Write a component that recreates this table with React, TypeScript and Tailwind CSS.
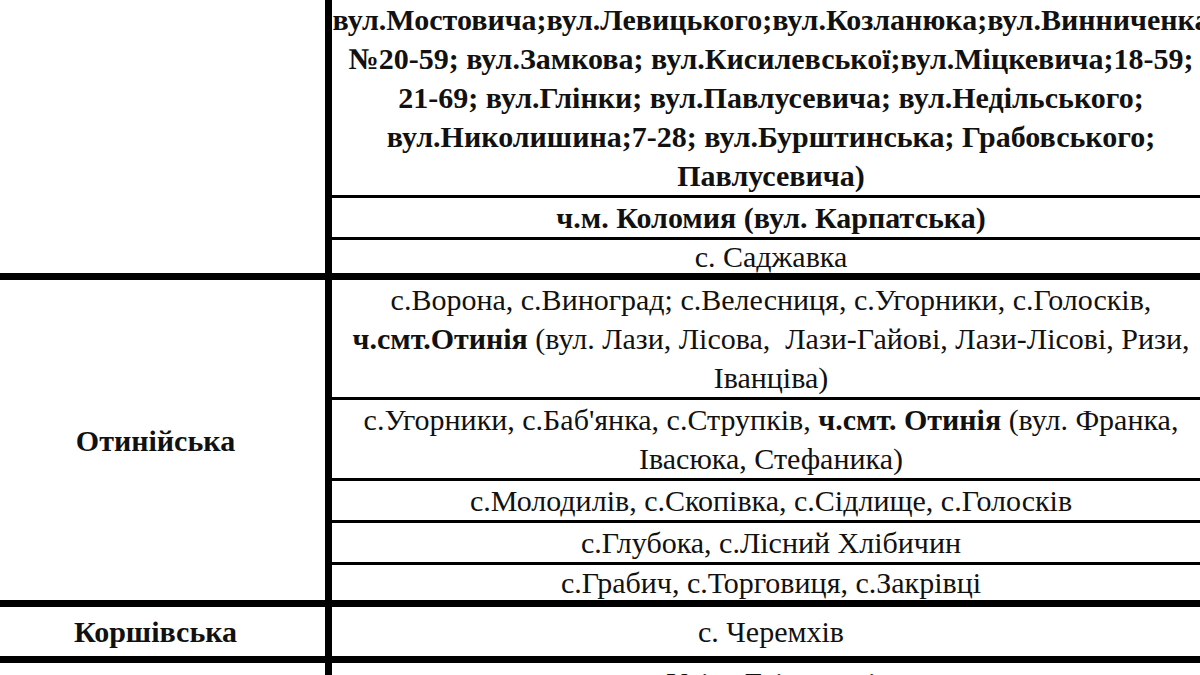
import React from "react";

type Row = {
  lines: React.ReactNode[];
  bold?: boolean;
  h?: string;
};

type Group = {
  name: string;
  rows: Row[];
};

const groups: Group[] = [
  {
    name: "",
    rows: [
      {
        bold: true,
        lines: [
          "вул.Мостовича;вул.Левицького;вул.Козланюка;вул.Винниченка",
          "№20-59; вул.Замкова; вул.Кисилевської;вул.Міцкевича;18-59;",
          "21-69; вул.Глінки; вул.Павлусевича; вул.Недільського;",
          "вул.Николишина;7-28; вул.Бурштинська; Грабовського;",
          "Павлусевича)",
        ],
      },
      { bold: true, lines: ["ч.м. Коломия (вул. Карпатська)"] },
      { lines: ["с. Саджавка"], h: "h-[36px]" },
    ],
  },
  {
    name: "Отинійська",
    rows: [
      {
        lines: [
          "с.Ворона, с.Виноград; с.Велесниця, с.Угорники, с.Голосків,",
          <>
            <b>ч.смт.Отинія</b> (вул. Лази, Лісова,  Лази-Гайові, Лази-Лісові, Ризи,
          </>,
          "Іванціва)",
        ],
      },
      {
        lines: [
          <>
            с.Угорники, с.Баб'янка, с.Струпків, <b>ч.смт. Отинія</b> (вул. Франка,
          </>,
          "Івасюка, Стефаника)",
        ],
      },
      { lines: ["с.Молодилів, с.Скопівка, с.Сідлище, с.Голосків"] },
      { lines: ["с.Глубока, с.Лісний Хлібичин"] },
      { lines: ["с.Грабич, с.Торговиця, с.Закрівці"], h: "h-[38px]" },
    ],
  },
  {
    name: "Коршівська",
    rows: [{ lines: ["с. Черемхів"], h: "h-[49px]" }],
  },
  {
    name: "",
    rows: [{ lines: ["Уніж, Гвіздецькі"] }],
  },
];

function Cell({ row, first }: { row: Row; first: boolean }) {
  return (
    <div
      className={`flex flex-col justify-center items-center ${row.h ?? ""} ${
        first ? "" : "border-t-[3px] border-black"
      } ${row.bold ? "font-bold" : ""}`}
    >
      {row.lines.map((line, i) => (
        <div key={i} className="whitespace-pre leading-[39px] text-center">
          {line}
        </div>
      ))}
    </div>
  );
}

export default function App() {
  return (
    <div className="w-[1200px] h-[675px] overflow-hidden bg-white text-[#111] text-[30px] font-['Liberation_Serif','Times_New_Roman',serif]">
      <div className="w-[1210px] flex flex-col">
        {groups.map((g, gi) => (
          <div key={gi} className={gi === 0 ? "" : "border-t-[7px] border-black"}>
            <div className="flex">
              <div className="w-[325px] shrink-0 flex items-center justify-center pr-[14px] font-bold">
                {g.name}
              </div>
              <div className="w-[7px] shrink-0 bg-black" />
              <div className="w-[878px] shrink-0 flex flex-col">
                {g.rows.map((r, ri) => (
                  <Cell key={ri} row={r} first={ri === 0} />
                ))}
              </div>
            </div>
          </div>
        ))}
      </div>
    </div>
  );
}
